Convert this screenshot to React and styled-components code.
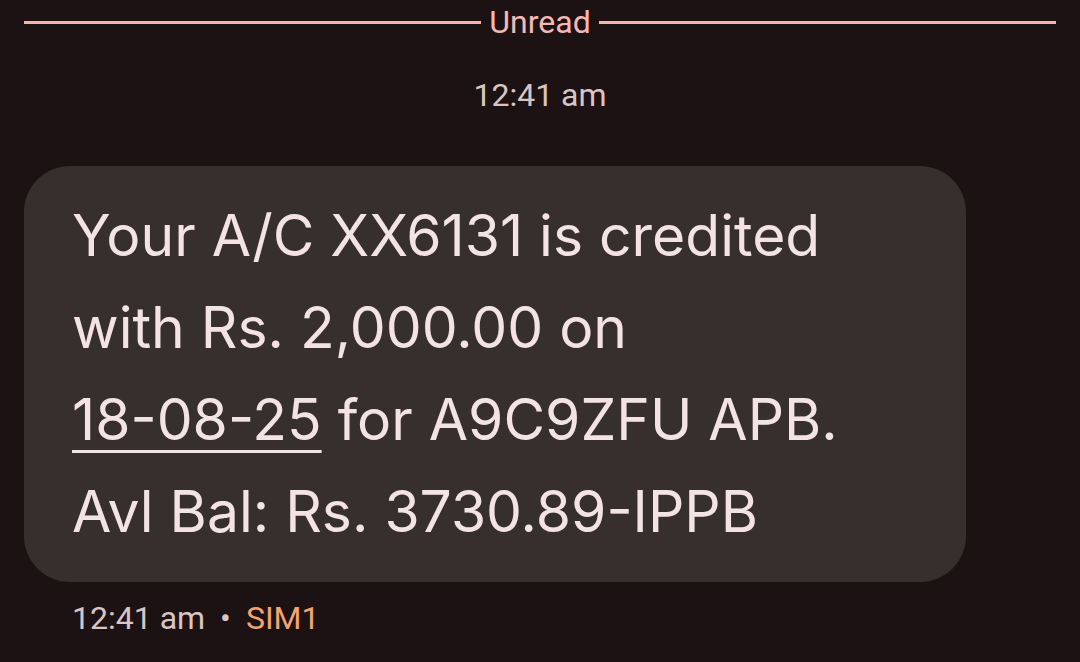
import React from "react";
import styled, { createGlobalStyle } from "styled-components";

const Global = createGlobalStyle`
  html, body { margin: 0; padding: 0; background: #1c1213; }
  body { font-family: Roboto, "Noto Sans", sans-serif; }
`;

const Screen = styled.div`
  width: 1080px;
  height: 662px;
  background: #1c1213;
  display: flex;
  flex-direction: column;
  overflow: hidden;
`;

const Divider = styled.div`
  height: 44px;
  padding: 0 24px;
  display: flex;
  align-items: center;
  gap: 8px;
`;

const Rule = styled.div`
  flex: 1;
  height: 3px;
  background: #f3b7b2;
`;

const DividerLabel = styled.span`
  font-size: 32px;
  line-height: 40px;
  color: #f6b8b3;
`;

const TimeStamp = styled.div`
  margin-top: 31px;
  text-align: center;
  font-size: 32px;
  line-height: 40px;
  color: #d9c5c4;
`;

const Bubble = styled.div`
  margin: 51px 0 0 24px;
  width: 942px;
  box-sizing: border-box;
  padding: 24px 48px;
  background: #372f2e;
  border-radius: 46px;
  color: #f3e4e3;
  font-family: Inter, Roboto, sans-serif;
  font-size: 57px;
  line-height: 92px;
`;

const DateLink = styled.span`
  text-decoration: underline;
  text-decoration-thickness: 3px;
  text-underline-offset: 10px;
`;

const Meta = styled.div`
  margin: 16px 0 0 72px;
  font-size: 32px;
  line-height: 40px;
  color: #d9c5c4;
  display: flex;
  gap: 15px;
`;

const Sim = styled.span`
  color: #f4a46e;
`;

export default function App() {
  return (
    <>
      <Global />
      <Screen>
        <Divider>
          <Rule />
          <DividerLabel>Unread</DividerLabel>
          <Rule />
        </Divider>
        <TimeStamp>12:41 am</TimeStamp>
        <Bubble>
          Your A/C XX6131 is credited
          <br />
          with Rs. 2,000.00 on
          <br />
          <DateLink>18-08-25</DateLink> for A9C9ZFU APB.
          <br />
          Avl Bal: Rs. 3730.89-IPPB
        </Bubble>
        <Meta>
          <span>12:41 am</span>
          <span>•</span>
          <Sim>SIM1</Sim>
        </Meta>
      </Screen>
    </>
  );
}
